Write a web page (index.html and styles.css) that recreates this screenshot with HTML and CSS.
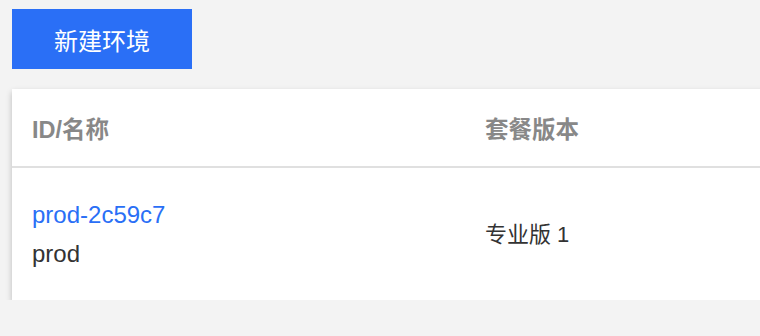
FILE: index.html
```html
<!DOCTYPE html>
<html lang="zh-CN">
<head>
<meta charset="utf-8">
<title>环境列表</title>
<link rel="stylesheet" href="styles.css">
</head>
<body>
<div class="page">
  <div class="toolbar">
    <button class="btn-primary" type="button">新建环境</button>
  </div>
  <div class="card">
    <table class="env-table">
      <thead>
        <tr>
          <th class="col-id">ID/名称</th>
          <th class="col-plan">套餐版本</th>
        </tr>
      </thead>
      <tbody>
        <tr>
          <td class="col-id">
            <a class="env-link" href="#">prod-2c59c7</a>
            <div class="env-name">prod</div>
          </td>
          <td class="col-plan plan-cell">专业版 1</td>
        </tr>
      </tbody>
    </table>
  </div>
</div>
</body>
</html>
```

FILE: styles.css
```css
html, body {
  margin: 0;
  padding: 0;
  background: #f3f3f3;
  overflow: hidden;
}
body {
  font-family: "Liberation Sans", "Noto Sans CJK SC", sans-serif;
  color: #333;
}
.page {
  padding: 9px 0 0 12px;
  width: 1100px;
}
.toolbar {
  display: flex;
  margin-bottom: 20px;
}
.btn-primary {
  width: 180px;
  height: 60px;
  border: none;
  background: #2a6ff6;
  color: #fff;
  font-family: "Liberation Sans", "Noto Sans CJK SC", sans-serif;
  font-size: 24px;
  padding: 0;
  cursor: pointer;
}
.card {
  background: #fff;
  width: 1000px;
  box-shadow: 0 3px 6px rgba(0, 0, 0, 0.24);
}
.env-table {
  width: 100%;
  border-collapse: collapse;
  table-layout: fixed;
}
.env-table .col-id {
  width: 453px;
}
.env-table th {
  height: 78px;
  padding: 0 20px;
  text-align: left;
  font-size: 23.5px;
  font-weight: 700;
  color: #888;
  border-bottom: 2px solid #e0e0e0;
  box-sizing: border-box;
  vertical-align: middle;
}
.env-table td {
  height: 133px;
  padding: 0 20px;
  font-size: 24px;
  line-height: 39px;
  vertical-align: middle;
  box-sizing: border-box;
}
.env-table td.plan-cell {
  font-size: 22px;
}
.env-link {
  color: #2a6ff6;
  text-decoration: none;
  display: block;
}
.env-name {
  color: #333;
}
```
